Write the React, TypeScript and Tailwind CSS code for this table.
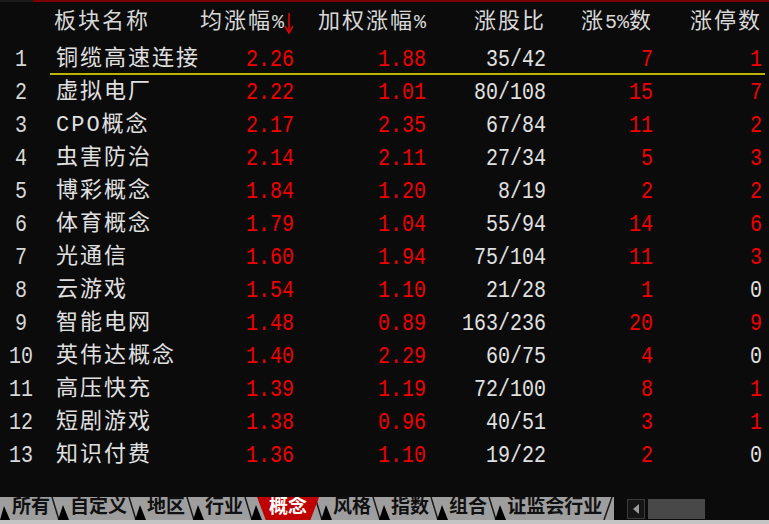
type Row = [string, string, string, string, string, string, string];

const rows: Row[] = [
  ["1", "铜缆高速连接", "2.26", "1.88", "35/42", "7", "1"],
  ["2", "虚拟电厂", "2.22", "1.01", "80/108", "15", "7"],
  ["3", "CPO概念", "2.17", "2.35", "67/84", "11", "2"],
  ["4", "虫害防治", "2.14", "2.11", "27/34", "5", "3"],
  ["5", "博彩概念", "1.84", "1.20", "8/19", "2", "2"],
  ["6", "体育概念", "1.79", "1.04", "55/94", "14", "6"],
  ["7", "光通信", "1.60", "1.94", "75/104", "11", "3"],
  ["8", "云游戏", "1.54", "1.10", "21/28", "1", "0"],
  ["9", "智能电网", "1.48", "0.89", "163/236", "20", "9"],
  ["10", "英伟达概念", "1.40", "2.29", "60/75", "4", "0"],
  ["11", "高压快充", "1.39", "1.19", "72/100", "8", "1"],
  ["12", "短剧游戏", "1.38", "0.96", "40/51", "3", "1"],
  ["13", "知识付费", "1.36", "1.10", "19/22", "2", "0"],
];

const tabs = ["所有", "自定义", "地区", "行业", "概念", "风格", "指数", "组合", "证监会行业"];

const grid = "grid grid-cols-[42px_171px_81px_132px_120px_107px_109px] items-center";

function Num({ v, red = true }: { v: string; red?: boolean }) {
  return (
    <span className={`inline-block scale-y-[1.2] text-[20px] ${red && v !== "0" ? "text-[#f00000]" : "text-[#e0e0e0]"}`}>
      {v}
    </span>
  );
}

function Sep({ first = false }: { first?: boolean }) {
  return (
    <svg width={first ? 12 : 20} height="23" viewBox={first ? "0 0 12 23" : "0 0 20 23"} className="shrink-0">
      {first ? (
        <polygon points="0,23 4,9 10,23" fill="#000" />
      ) : (
        <>
          <line x1="2" y1="0" x2="9" y2="23" stroke="#1a1a1a" strokeWidth="1.5" />
          <polygon points="8,23 13,8 19,23" fill="#000" />
        </>
      )}
    </svg>
  );
}

export default function App() {
  return (
    <div
      className="w-[769px] h-[524px] bg-[#0b0b0b] flex flex-col overflow-hidden select-none"
      style={{ fontFamily: '"Liberation Mono", "Noto Sans CJK SC", monospace' }}
    >
      {/* top border */}
      <div className="flex h-[2px] shrink-0">
        <div className="w-[33px] bg-[#1c1c1c]" />
        <div className="flex-1 bg-[#7a0000]" />
      </div>

      {/* header */}
      <div className={`${grid} h-[41px] pt-[4px] pb-[4px] text-[#d8d8d8] text-[22px] whitespace-nowrap shrink-0`}>
        <div />
        <div className="pl-[12px] tracking-[2px]">板块名称</div>
        <div className="flex justify-end items-center">
          <span className="tracking-[2px]">均涨幅</span>
          <span className="text-[20px]">%</span>
          <svg width="10" height="22" viewBox="0 0 10 22" className="shrink-0">
            <line x1="5" y1="1" x2="5" y2="20" stroke="#f00000" strokeWidth="1.5" />
            <polyline points="1,14 5,21 9,14" fill="none" stroke="#f00000" strokeWidth="1.5" />
          </svg>
        </div>
        <div className="flex justify-end items-center">
          <span className="tracking-[2px]">加权涨幅</span>
          <span className="text-[20px]">%</span>
        </div>
        <div className="flex justify-end items-center tracking-[2px]">涨股比</div>
        <div className="flex justify-end items-center">
          <span className="tracking-[2px]">涨</span>
          <span className="text-[20px]">5%</span>
          <span className="tracking-[2px]">数</span>
        </div>
        <div className="flex justify-end items-center tracking-[2px]">涨停数</div>
      </div>

      {/* rows */}
      <div className="flex-1">
        {rows.map((r, i) => (
          <div key={r[0]} className={`${grid} relative h-[33px]`}>
            <div className="text-center text-[20px] text-[#d8d8d8]">
              <span className="inline-block scale-y-[1.2]">{r[0]}</span>
            </div>
            <div className="pl-[14px] text-[22px] tracking-[2px] text-[#e0e0e0] whitespace-nowrap">{r[1]}</div>
            <div className="text-right"><Num v={r[2]} /></div>
            <div className="text-right"><Num v={r[3]} /></div>
            <div className="text-right"><Num v={r[4]} red={false} /></div>
            <div className="text-right"><Num v={r[5]} /></div>
            <div className="text-right"><Num v={r[6]} /></div>
            {i === 0 && <div className="absolute left-[50px] right-[4px] bottom-[1px] h-[2px] bg-[#b8b400]" />}
          </div>
        ))}
      </div>

      {/* sheet tabs */}
      <div className="flex h-[23px] shrink-0 items-stretch">
        <div className="flex items-stretch bg-[#9e9e9e]">
          <Sep first />
          {tabs.map((t, i) => (
            <div key={t} className="flex items-stretch">
              {t === "概念" ? (
                <div className="bg-[#c00000] [clip-path:polygon(0_0,100%_0,86%_100%,14%_100%)] -mx-[6px] px-[12px] flex items-center text-[19px] font-bold text-white leading-none">
                  {t}
                </div>
              ) : (
                <div className="flex items-center text-[19px] font-bold text-[#111] leading-none">{t}</div>
              )}
              {i < tabs.length - 1 && <Sep />}
            </div>
          ))}
          <svg width="12" height="23" viewBox="0 0 12 23" className="shrink-0">
            <line x1="2" y1="23" x2="10" y2="0" stroke="#1a1a1a" strokeWidth="1.5" />
          </svg>
        </div>
        <div className="flex items-center pl-[13px] gap-[3px]">
          <div className="w-[18px] h-[20px] border border-[#3c3c3c] bg-[#151515] flex items-center justify-center">
            <svg width="8" height="10" viewBox="0 0 8 10">
              <polygon points="7,0 1,5 7,10" fill="#9a9a9a" />
            </svg>
          </div>
          <div className="w-[57px] h-[20px] bg-[#484848]" />
        </div>
      </div>
      <div className="h-[4px] bg-[#c4c4c4] shrink-0" />
    </div>
  );
}
